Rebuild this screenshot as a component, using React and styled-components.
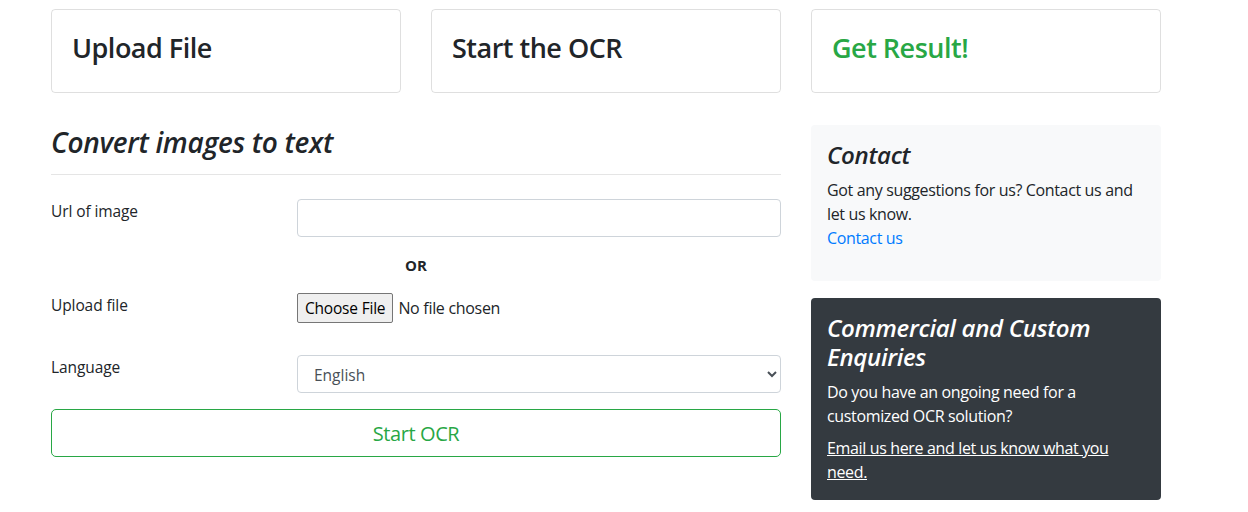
import React from "react";
import styled, { createGlobalStyle } from "styled-components";

const Global = createGlobalStyle`
  * { box-sizing: border-box; }
  html, body { margin: 0; padding: 0; background: #fff; }
  body {
    font-family: "Open Sans", "Noto Sans", sans-serif;
    font-size: 16px;
    line-height: 1.5;
    color: #212529;
  }
`;

const Page = styled.div`
  width: 1110px;
  margin-left: 51px;
  padding-top: 9px;
`;

const StepRow = styled.div`
  display: grid;
  grid-template-columns: repeat(3, 350px);
  column-gap: 30px;
`;

const StepCard = styled.div`
  border: 1px solid rgba(0, 0, 0, 0.125);
  border-radius: 4px;
  padding: 22px 20px 20px 20px;
  height: 84px;
`;

const StepTitle = styled.h3`
  margin: 0;
  font-size: 27px;
  font-weight: 600;
  line-height: 1.2;
  letter-spacing: -0.5px;
  color: ${(p) => (p.$accent ? "#28a745" : "#212529")};
`;

const MainRow = styled.div`
  display: grid;
  grid-template-columns: 730px 350px;
  column-gap: 30px;
  margin-top: 32px;
  align-items: start;
`;

const FormColumn = styled.div``;

const FormHeading = styled.h3`
  margin: 1px 0 0;
  font-size: 28px;
  font-style: italic;
  font-weight: 600;
  line-height: 33.6px;
  letter-spacing: -0.3px;
`;

const Rule = styled.hr`
  margin: 14px 0 24px;
  border: 0;
  border-top: 1px solid rgba(0, 0, 0, 0.1);
`;

const FieldRow = styled.div`
  display: grid;
  grid-template-columns: 236px 484px;
  column-gap: 10px;
  margin-bottom: ${(p) => p.$gap || 16}px;
  min-height: ${(p) => p.$min || 0}px;
`;

const Label = styled.label`
  font-size: 15.5px;
  line-height: 24px;
  letter-spacing: -0.1px;
`;

const TextInput = styled.input`
  display: block;
  width: 100%;
  height: 38px;
  border: 1px solid #ced4da;
  border-radius: 4px;
  padding: 6px 12px;
  font: inherit;
`;

const OrLine = styled.div`
  text-align: center;
  font-weight: 700;
  font-size: 15px;
  line-height: 24px;
  margin-bottom: 16px;
`;

const FileInput = styled.input`
  font-family: "Open Sans", sans-serif;
  font-size: 16px;
  color: #212529;
  letter-spacing: -0.3px;
  height: 30px;
  &::file-selector-button {
    font-family: "Open Sans", sans-serif;
    font-size: 15.5px;
    letter-spacing: -0.2px;
    height: 30px;
    padding: 0 7px;
    margin-right: 5px;
    background: #efefef;
    border: 1px solid #767676;
    border-radius: 2px;
    color: #000;
  }
`;

const Select = styled.select`
  display: block;
  width: 100%;
  height: 38px;
  border: 1px solid #ced4da;
  border-radius: 4px;
  padding: 7px 10px 5px 12px;
  font-family: "Open Sans", sans-serif;
  font-size: 15.5px;
  color: #495057;
  background: #fff;
`;

const OutlineButton = styled.button`
  display: block;
  width: 100%;
  height: 48px;
  padding: 3px 0 0;
  border: 1px solid #28a745;
  border-radius: 5px;
  background: #fff;
  color: #28a745;
  font-family: "Open Sans", sans-serif;
  font-size: 20px;
  line-height: 30px;
  letter-spacing: -0.4px;
  cursor: pointer;
`;

const SideColumn = styled.div`
  display: flex;
  flex-direction: column;
  gap: 17px;
`;

const InfoBox = styled.div`
  border-radius: 4px;
  padding: 16px;
  background: ${(p) => (p.$dark ? "#343a40" : "#f8f9fa")};
  color: ${(p) => (p.$dark ? "#fff" : "#212529")};
  min-height: ${(p) => p.$min || 0}px;
`;

const BoxTitle = styled.h4`
  margin: 0 0 8px;
  font-size: 24px;
  font-style: italic;
  font-weight: 600;
  line-height: 28.8px;
  letter-spacing: -0.3px;
`;

const BoxText = styled.p`
  margin: 0 0 ${(p) => p.$mb ?? 8}px;
  font-size: 16px;
  line-height: 24px;
  letter-spacing: -0.35px;
`;

const BlueLink = styled.a`
  color: #007bff;
  text-decoration: none;
`;

const WhiteLink = styled.a`
  color: #fff;
  text-decoration: underline;
`;

export default function App() {
  return (
    <>
      <Global />
      <Page>
        <StepRow>
          <StepCard>
            <StepTitle>Upload File</StepTitle>
          </StepCard>
          <StepCard>
            <StepTitle>Start the OCR</StepTitle>
          </StepCard>
          <StepCard>
            <StepTitle $accent>Get Result!</StepTitle>
          </StepCard>
        </StepRow>
        <MainRow>
          <FormColumn>
            <FormHeading>Convert images to text</FormHeading>
            <Rule />
            <FieldRow>
              <Label>Url of image</Label>
              <TextInput type="text" />
            </FieldRow>
            <OrLine>OR</OrLine>
            <FieldRow $min={46} $gap={16}>
              <Label>Upload file</Label>
              <div>
                <FileInput type="file" />
              </div>
            </FieldRow>
            <FieldRow>
              <Label>Language</Label>
              <Select defaultValue="English">
                <option>English</option>
              </Select>
            </FieldRow>
            <OutlineButton>Start OCR</OutlineButton>
          </FormColumn>
          <SideColumn>
            <InfoBox $min={156}>
              <BoxTitle>Contact</BoxTitle>
              <BoxText $mb={0}>
                Got any suggestions for us? Contact us and let us know.
                <br />
                <BlueLink href="#">Contact us</BlueLink>
              </BoxText>
            </InfoBox>
            <InfoBox $dark>
              <BoxTitle>Commercial and Custom Enquiries</BoxTitle>
              <BoxText>Do you have an ongoing need for a customized OCR solution?</BoxText>
              <BoxText $mb={0}>
                <WhiteLink href="#">Email us here and let us know what you need.</WhiteLink>
              </BoxText>
            </InfoBox>
          </SideColumn>
        </MainRow>
      </Page>
    </>
  );
}
